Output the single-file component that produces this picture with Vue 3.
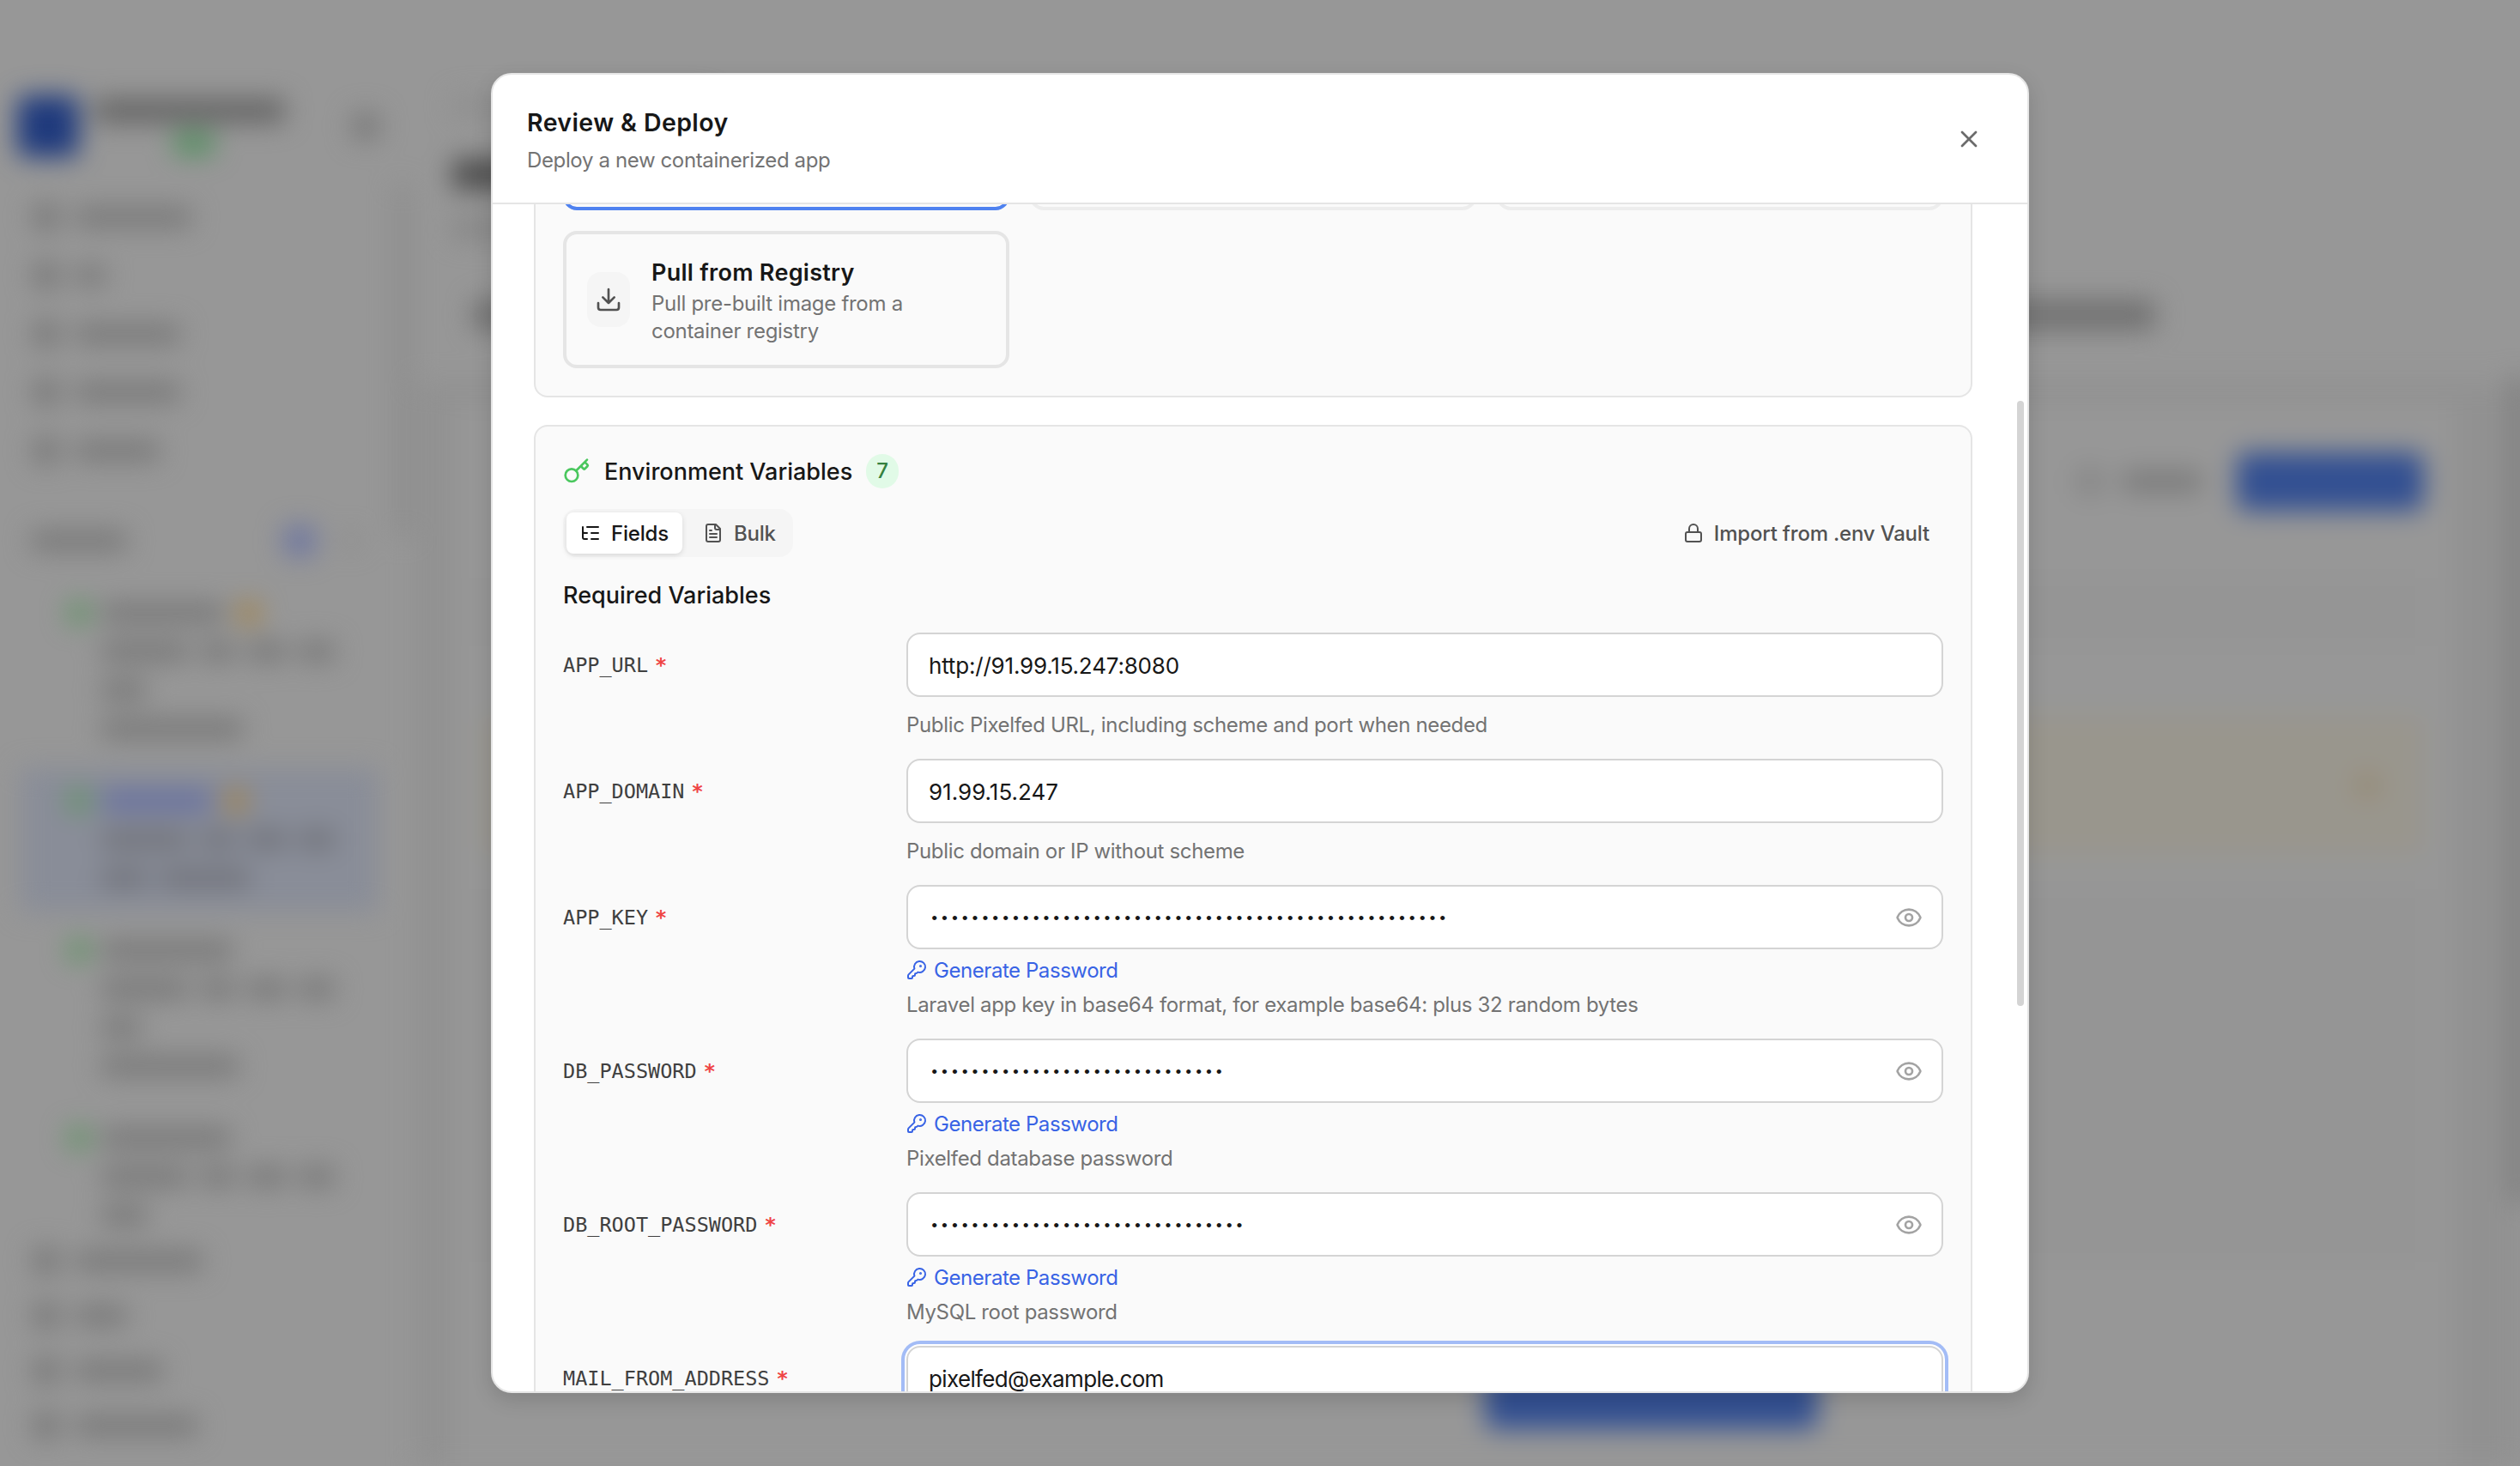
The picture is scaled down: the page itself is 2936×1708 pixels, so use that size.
<template>
  <div class="screen">
    <!-- page behind the dialog -->
    <div class="backdrop">
      <aside class="sidebar">
        <div class="brand">
          <div class="logo"></div>
          <div class="brand-text">
            <i class="bar brand-name"></i>
            <i class="bar brand-status"></i>
          </div>
          <i class="blob collapse"></i>
        </div>
        <div v-for="(w, i) in topNav" :key="'t' + i" class="nav-row">
          <i class="blob"></i>
          <i class="bar" :style="{ width: w + 'px' }"></i>
        </div>
        <div class="section-row">
          <i class="bar section-name"></i>
          <i class="blob section-count"></i>
          <i class="blob section-add"></i>
        </div>
        <div class="servers">
          <div v-for="(s, i) in servers" :key="'s' + i" class="server" :class="{ selected: s.selected }">
            <div class="server-line first">
              <i class="dot green"></i>
              <i class="bar name" :style="{ width: s.name + 'px' }"></i>
              <i v-if="s.warn" class="dot orange"></i>
            </div>
            <div v-for="(line, j) in s.lines" :key="j" class="server-line">
              <i v-for="(w, k) in line" :key="k" class="bar" :style="{ width: w + 'px' }"></i>
            </div>
          </div>
        </div>
        <div v-for="(w, i) in bottomNav" :key="'b' + i" class="nav-row short">
          <i class="blob"></i>
          <i class="bar" :style="{ width: w + 'px' }"></i>
        </div>
      </aside>
      <i class="side-scroll"></i>
      <main class="page">
        <div class="page-head">
          <i class="bar crumb"></i>
          <i class="bar heading"></i>
          <i class="bar sub"></i>
          <div class="tabs"><i class="bar"></i><i class="bar tab-last"></i></div>
        </div>
        <div class="page-body">
          <div class="card">
            <div class="card-head">
              <i class="bar refresh-icon"></i>
              <i class="bar refresh"></i>
              <i class="add-button"></i>
            </div>
            <div class="card-box"></div>
            <div class="notice"><i class="dot orange"></i></div>
            <div class="card-box tall"></div>
            <div class="deploy-button"></div>
          </div>
        </div>
      </main>
      <i class="page-scroll"></i>
    </div>

    <div class="modal">
      <header class="modal-header">
        <div>
          <h2>Review &amp; Deploy</h2>
          <p>Deploy a new containerized app</p>
        </div>
        <button class="close">
          <svg class="icon-lg" viewBox="0 0 24 24"><path d="M18 6 6 18M6 6l12 12" /></svg>
        </button>
      </header>

      <div class="modal-body">
        <section class="panel source-panel">
          <div class="sources">
            <div class="source previous active"></div>
            <div class="source previous disabled"></div>
            <div class="source previous disabled"></div>
            <div class="source">
              <div class="source-icon">
                <svg class="icon-lg" viewBox="0 0 24 24">
                  <path d="M12 15V3M21 15v4a2 2 0 0 1-2 2H5a2 2 0 0 1-2-2v-4M7 10l5 5 5-5" />
                </svg>
              </div>
              <div class="source-text">
                <h3>Pull from Registry</h3>
                <p>Pull pre-built image from a<br />container registry</p>
              </div>
            </div>
          </div>
        </section>

        <section class="panel env-panel">
          <div class="env-title">
            <svg class="icon-lg key" viewBox="0 0 24 24">
              <path d="m15.5 7.5 2.3 2.3a1 1 0 0 0 1.4 0l2.1-2.1a1 1 0 0 0 0-1.4L19 4M21 2l-9.6 9.6" />
              <circle cx="7.5" cy="15.5" r="5.5" />
            </svg>
            <h3>Environment Variables</h3>
            <span class="badge">7</span>
          </div>

          <div class="toolbar">
            <div class="toggle">
              <button class="toggle-item on">
                <svg class="icon-sm" viewBox="0 0 24 24">
                  <path d="M8 5h13M13 12h8M13 19h8M3 10a2 2 0 0 0 2 2h3M3 5v12a2 2 0 0 0 2 2h3" />
                </svg>
                <span>Fields</span>
              </button>
              <button class="toggle-item">
                <svg class="icon-sm" viewBox="0 0 24 24">
                  <path d="M15 2H6a2 2 0 0 0-2 2v16a2 2 0 0 0 2 2h12a2 2 0 0 0 2-2V7Z" />
                  <path d="M14 2v4a2 2 0 0 0 2 2h4M10 9H8M16 13H8M16 17H8" />
                </svg>
                <span>Bulk</span>
              </button>
            </div>
            <button class="import">
              <svg class="icon-sm" viewBox="0 0 24 24">
                <rect x="3" y="11" width="18" height="11" rx="2" />
                <path d="M7 11V7a5 5 0 0 1 10 0v4" />
              </svg>
              <span>Import from .env Vault</span>
            </button>
          </div>

          <h4>Required Variables</h4>

          <div class="fields">
            <div v-for="f in fields" :key="f.name" class="field">
              <label>{{ f.name }}<span class="star">*</span></label>
              <div class="control">
                <div class="input" :class="{ focused: f.focused }">
                  <span v-if="f.secret" class="dots">{{ '•'.repeat(f.secret) }}</span>
                  <span v-else class="value" :class="f.kind">{{ f.value }}</span>
                  <svg v-if="f.secret" class="icon-lg eye" viewBox="0 0 24 24">
                    <path
                      d="M2.062 12.348a1 1 0 0 1 0-.696 10.75 10.75 0 0 1 19.876 0 1 1 0 0 1 0 .696 10.75 10.75 0 0 1-19.876 0"
                    />
                    <circle cx="12" cy="12" r="3" />
                  </svg>
                </div>
                <button v-if="f.secret" class="generate">
                  <svg class="icon-sm" viewBox="0 0 24 24">
                    <path
                      d="M2.586 17.414A2 2 0 0 0 2 18.828V21a1 1 0 0 0 1 1h3a1 1 0 0 0 1-1v-1a1 1 0 0 1 1-1h1a1 1 0 0 0 1-1v-1a1 1 0 0 1 1-1h.172a2 2 0 0 0 1.414-.586l.814-.814a6.5 6.5 0 1 0-4-4z"
                    />
                    <circle cx="16.5" cy="7.5" r=".5" fill="currentColor" />
                  </svg>
                  <span>Generate Password</span>
                </button>
                <p v-if="f.hint" class="hint" :class="{ spaced: !f.secret }">{{ f.hint }}</p>
              </div>
            </div>
          </div>
        </section>
        <i class="thumb"></i>
      </div>
    </div>
  </div>
</template>

<script setup>
import { ref } from 'vue'

const topNav = [135, 35, 122, 122, 98]
const bottomNav = [148, 60, 102, 142]

const servers = [
  { name: 142, warn: true, lines: [[102, 40, 46, 42], [52], [165]] },
  { name: 127, warn: true, selected: true, lines: [[102, 40, 46, 42], [54, 105]] },
  { name: 152, lines: [[102, 40, 46, 42], [46], [160]] },
  { name: 150, lines: [[102, 40, 46, 42], [54]] },
]

const fields = ref([
  {
    name: 'APP_URL',
    kind: 'url',
    value: 'http://91.99.15.247:8080',
    hint: 'Public Pixelfed URL, including scheme and port when needed',
  },
  { name: 'APP_DOMAIN', value: '91.99.15.247', hint: 'Public domain or IP without scheme' },
  { name: 'APP_KEY', secret: 51, hint: 'Laravel app key in base64 format, for example base64: plus 32 random bytes' },
  { name: 'DB_PASSWORD', secret: 29, hint: 'Pixelfed database password' },
  { name: 'DB_ROOT_PASSWORD', secret: 31, hint: 'MySQL root password' },
  { name: 'MAIL_FROM_ADDRESS', kind: 'email', value: 'pixelfed@example.com', focused: true },
])
</script>

<style>
html,
body {
  margin: 0;
  background: #979797;
  overflow: hidden;
}
</style>

<style scoped>
* {
  box-sizing: border-box;
}

.screen {
  position: relative;
  width: 2936px;
  height: 1708px;
  display: flex;
  align-items: center;
  justify-content: center;
  overflow: hidden;
  background: #979797;
  color: #171717;
  font-family: Inter, 'Liberation Sans', sans-serif;
}

h2,
h3,
h4,
p {
  margin: 0;
}

button {
  border: 0;
  padding: 0;
  background: none;
  font: inherit;
  color: inherit;
  letter-spacing: inherit;
  display: flex;
  align-items: center;
}

svg {
  fill: none;
  stroke: currentColor;
  stroke-width: 2;
  stroke-linecap: round;
  stroke-linejoin: round;
  flex-shrink: 0;
}

.icon-lg {
  width: 32px;
  height: 32px;
}

.icon-sm {
  width: 24px;
  height: 24px;
}

/* backdrop */
.backdrop {
  position: absolute;
  inset: 0;
  display: flex;
  filter: blur(15px);
}

.bar {
  display: block;
  height: 24px;
  border-radius: 6px;
  background: #797979;
  flex-shrink: 0;
}

.blob {
  display: block;
  width: 32px;
  height: 32px;
  border-radius: 8px;
  background: #7a7a7a;
  flex-shrink: 0;
}

.dot {
  display: block;
  width: 28px;
  height: 28px;
  border-radius: 50%;
  flex-shrink: 0;
}

.green {
  background: #639467;
}

.orange {
  background: #a3844c;
}

.sidebar {
  width: 485px;
  padding-top: 110px;
}

.brand {
  display: flex;
  align-items: center;
  height: 74px;
  margin-bottom: 35px;
  padding-left: 20px;
}

.logo {
  width: 72px;
  height: 72px;
  border-radius: 10px;
  background: #1f3a7d;
}

.brand-text {
  width: 240px;
  margin-left: 18px;
}

.brand-name {
  width: 222px;
  height: 28px;
  background: #656565;
}

.brand-status {
  width: 48px;
  height: 26px;
  margin: 11px 0 0 92px;
  background: #569062;
}

.collapse {
  margin-left: 60px;
}

.nav-row {
  display: flex;
  align-items: center;
  gap: 18px;
  height: 68px;
  padding-left: 38px;
}

.short {
  height: 64px;
}

.section-row {
  display: flex;
  align-items: center;
  height: 68px;
  margin: 37px 0 12px;
  padding-left: 36px;
}

.section-name {
  width: 112px;
}

.section-count {
  width: 38px;
  height: 36px;
  margin-left: 182px;
  background: #7078a0;
}

.section-add {
  width: 18px;
  height: 18px;
  margin-left: 32px;
  background: #8a8a8a;
}

.servers {
  height: 761px;
  overflow: hidden;
}

.server {
  width: 416px;
  margin: 0 0 7px 24px;
  padding: 15px 0 17px 94px;
}

.selected {
  background: #898d98;
}

.selected .bar {
  background: #72747c;
}

.selected .bar.name {
  background: #6770a0;
}

.server-line {
  display: flex;
  align-items: center;
  gap: 14px;
  height: 45px;
}

.first {
  margin-left: -40px;
  gap: 13px;
}

.first .orange {
  margin-left: 2px;
}

.side-scroll {
  position: absolute;
  left: 462px;
  top: 215px;
  width: 14px;
  height: 410px;
  background: #8a8a8a;
}

.page {
  flex: 1;
}

.page-head {
  height: 446px;
  padding: 112px 0 0 42px;
}

.crumb {
  width: 300px;
  background: #8f8f8f;
}

.heading {
  width: 400px;
  height: 36px;
  margin-top: 49px;
  background: #4e4e4e;
}

.sub {
  width: 300px;
  margin-top: 33px;
  background: #868686;
}

.tabs {
  display: flex;
  justify-content: space-between;
  width: 1984px;
  margin-top: 72px;
  padding-left: 24px;
}

.tabs .bar {
  width: 200px;
  height: 34px;
  background: #707070;
}

.page-body {
  height: 1262px;
  padding: 24px 76px 0 42px;
  background: #919191;
}

.card {
  height: 1238px;
  padding: 57px 36px 0;
  background: #979797;
}

.card-head {
  display: flex;
  align-items: center;
  justify-content: flex-end;
  height: 68px;
}

.refresh-icon {
  width: 32px;
  height: 32px;
  background: #868686;
}

.refresh {
  width: 92px;
  margin-left: 22px;
}

.add-button {
  width: 218px;
  height: 68px;
  margin-left: 41px;
  border-radius: 12px;
  background: #335092;
}

.card-box {
  height: 80px;
  margin-top: 78px;
  background: #959595;
}

.notice {
  display: flex;
  align-items: center;
  justify-content: flex-end;
  height: 163px;
  margin-top: 80px;
  padding-right: 52px;
  border-radius: 16px;
  background: #99968d;
}

.notice .dot {
  background: #978972;
}

.card-box.tall {
  height: 434px;
  margin-top: 40px;
}

.deploy-button {
  width: 388px;
  height: 66px;
  margin: 129px 0 0 1167px;
  border-radius: 12px;
  background: #335092;
}

.page-scroll {
  position: absolute;
  right: -10px;
  top: 440px;
  width: 22px;
  height: 960px;
  background: #7e7e7e;
}

/* dialog */
.modal {
  position: relative;
  display: flex;
  flex-direction: column;
  width: 1792px;
  height: 1538px;
  border: 2px solid #e5e5e5;
  border-radius: 24px;
  overflow: hidden;
  background: #fff;
  box-shadow: 0 8px 24px rgba(0, 0, 0, 0.14);
}

.modal-header {
  display: flex;
  align-items: center;
  justify-content: space-between;
  height: 151px;
  flex-shrink: 0;
  padding: 0 52px 0 40px;
  border-bottom: 2px solid #e5e5e5;
}

.modal-header h2 {
  padding-top: 3px;
  font-size: 28.5px;
  font-weight: 600;
  line-height: 44px;
  letter-spacing: 0.4px;
}

.modal-header p {
  margin-top: 4px;
  font-size: 24px;
  line-height: 36px;
  letter-spacing: -0.37px;
  color: #737373;
}

.close {
  color: #6b6b6b;
}

.modal-body {
  position: relative;
  flex: 1;
  padding: 0 64px 0 48px;
  overflow: hidden;
}

.panel {
  border: 2px solid #e5e5e5;
  border-radius: 16px;
  padding: 32px;
  background: #fafafa;
}

/* scrolled up under the header */
.source-panel {
  margin-top: -60px;
}

.sources {
  display: grid;
  grid-template-columns: repeat(3, 520px);
  gap: 24px;
}

.source {
  display: flex;
  align-items: center;
  gap: 24px;
  height: 160px;
  padding: 0 24px;
  border: 4px solid #e5e5e5;
  border-radius: 16px;
}

.previous {
  height: 33px;
}

.active {
  border-color: #4f82f0;
}

.disabled {
  opacity: 0.6;
}

.source-icon {
  display: flex;
  align-items: center;
  justify-content: center;
  width: 50px;
  height: 64px;
  border-radius: 16px;
  background: #f5f5f5;
  color: #525252;
}

.source-text {
  padding: 2px 0 0 1px;
}

.source h3 {
  font-size: 27px;
  font-weight: 600;
  line-height: 40px;
  letter-spacing: 0.28px;
}

.source p {
  font-size: 24px;
  line-height: 32px;
  letter-spacing: -0.29px;
  color: #737373;
}

.env-panel {
  height: 1300px;
  margin-top: 32px;
}

.env-title {
  display: flex;
  align-items: center;
  gap: 16px;
  height: 40px;
}

.env-title h3 {
  font-size: 27px;
  font-weight: 500;
}

.key {
  color: #4ac75e;
}

.badge {
  padding: 0 12px;
  border-radius: 20px;
  background: #e1fae7;
  color: #35803f;
  font-size: 24px;
  font-weight: 500;
  line-height: 40px;
}

.toolbar {
  display: flex;
  align-items: center;
  justify-content: space-between;
  margin-top: 24px;
  font-size: 24px;
  font-weight: 500;
  letter-spacing: -0.2px;
  color: #525252;
}

.toggle {
  display: flex;
  gap: 8px;
  padding: 4px;
  border-radius: 16px;
  background: #f5f5f5;
}

.toggle-item {
  gap: 12px;
  height: 48px;
  padding: 0 16px;
  border-radius: 8px;
}

.on {
  background: #fff;
  color: #171717;
  box-shadow: 0 2px 6px rgba(0, 0, 0, 0.12);
}

.import {
  gap: 12px;
  padding-right: 16px;
}

h4 {
  margin-top: 25px;
  font-size: 27px;
  font-weight: 500;
  line-height: 40px;
}

.fields {
  display: flex;
  flex-direction: column;
  gap: 24px;
  margin-top: 23px;
}

.field {
  display: grid;
  grid-template-columns: 400px 1208px;
}

label {
  padding-top: 1px;
  font-family: 'DejaVu Sans Mono', monospace;
  font-size: 23.5px;
  line-height: 75px;
  height: 75px;
  color: #404040;
}

.star {
  margin-left: 8px;
  font-weight: 700;
  color: #ef4444;
}

.input {
  display: flex;
  align-items: center;
  justify-content: space-between;
  height: 75px;
  padding: 0 22px 0 24px;
  border: 2px solid #d4d4d4;
  border-radius: 16px;
  background: #fff;
  font-size: 26px;
}

.value {
  padding-top: 1px;
}

.url {
  letter-spacing: -0.19px;
}

.email {
  letter-spacing: -0.64px;
}

.focused {
  box-shadow:
    0 0 0 2px #fff,
    0 0 0 6px #a3bcf6;
}

.dots {
  padding: 5px 0 0 1px;
  font-family: 'Liberation Mono', monospace;
  font-size: 19px;
  letter-spacing: 0.44px;
}

.eye {
  color: #a3a3a3;
}

.generate {
  gap: 8px;
  height: 32px;
  margin-top: 8px;
  font-size: 24px;
  letter-spacing: -0.44px;
  color: #3863e5;
}

.hint {
  margin-top: 8px;
  padding-top: 2px;
  font-size: 24px;
  line-height: 30px;
  letter-spacing: -0.34px;
  color: #737373;
}

.spaced {
  margin-top: 16px;
}

.thumb {
  position: absolute;
  right: 4px;
  top: 229px;
  width: 8px;
  height: 705px;
  border-radius: 4px;
  background: #d4d4d4;
}
</style>
